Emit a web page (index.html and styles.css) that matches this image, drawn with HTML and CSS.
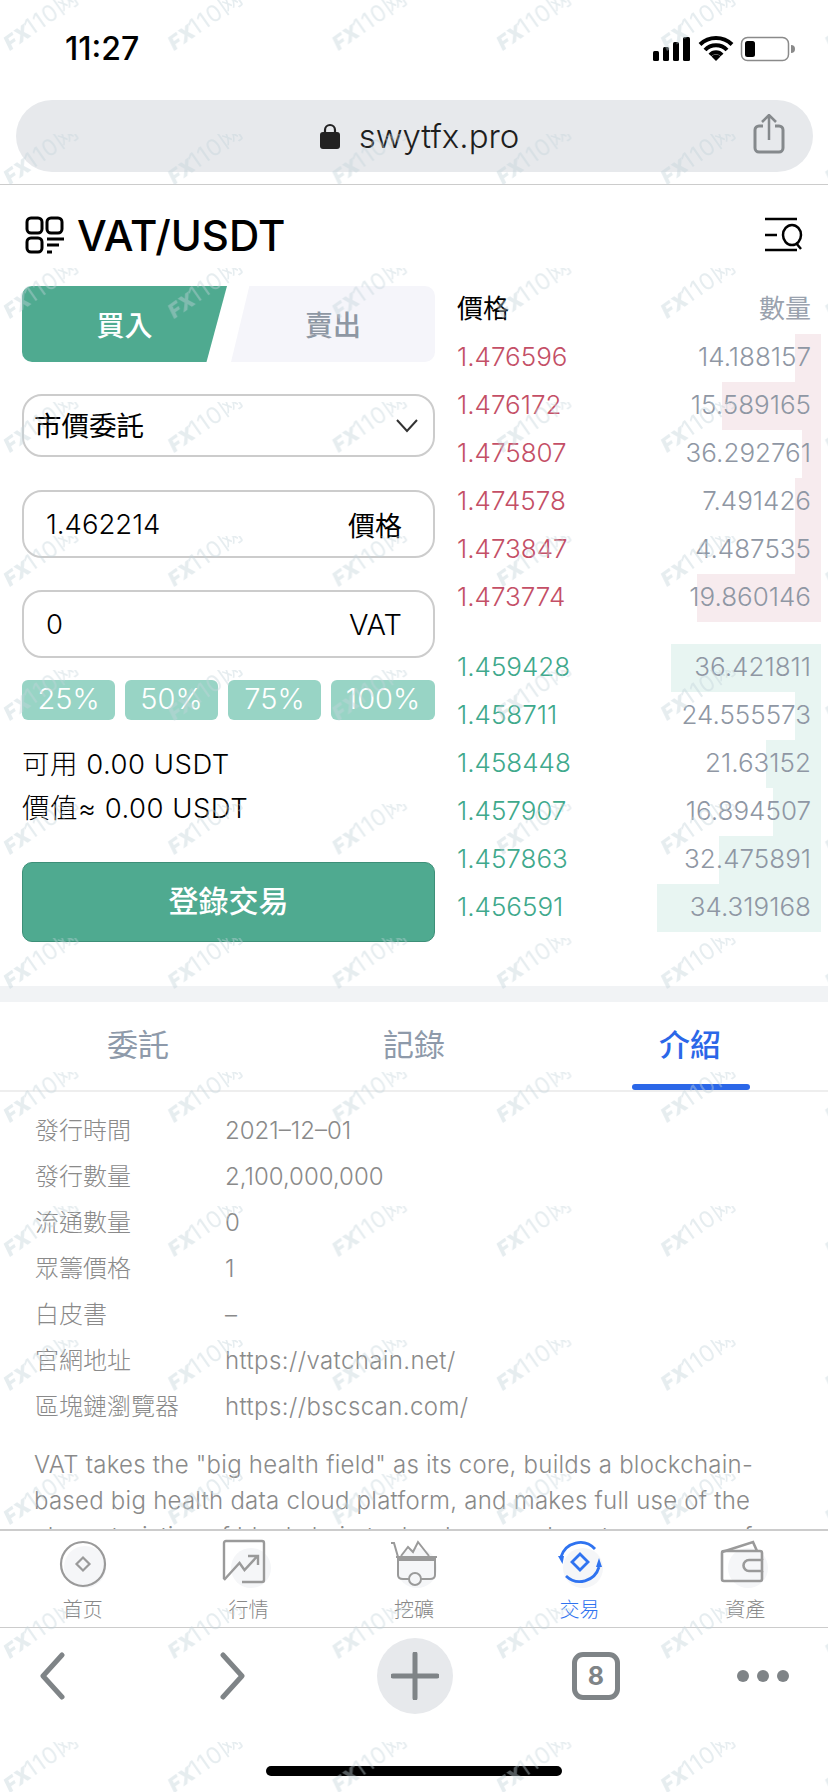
FILE: index.html
```html
<!DOCTYPE html>
<html lang="zh-Hant">
<head>
    <meta charset="UTF-8">
    <meta name="viewport" content="width=device-width, initial-scale=1.0">
    <title>VAT/USDT</title>
    <link rel="stylesheet" href="styles.css">
</head>
<body>
<div class="page">
    <!-- Status bar -->
    <div class="status-bar">
        <span class="time">11:27</span>
        <svg class="status-icons" width="142" height="26" viewBox="0 0 142 26">
            <rect x="0" y="15" width="6" height="10" rx="1.5"/>
            <rect x="10" y="11" width="6" height="14" rx="1.5"/>
            <rect x="20" y="6" width="6" height="19" rx="1.5"/>
            <rect x="30" y="1" width="7" height="24" rx="1.5"/>
            <path d="M47 8.5a23 23 0 0 1 32 0M52 14a15 15 0 0 1 22 0M57 19a8 8 0 0 1 12 0" fill="none" stroke="#000" stroke-width="4"/>
            <path d="M63 25l-4.500-4.500a6 6 0 0 1 9 0z"/>
            <rect x="88.500" y="1.500" width="47" height="23" rx="6" fill="#fff" stroke="#8a8a8a" stroke-width="1.500"/>
            <rect x="92" y="5" width="10" height="16" rx="2.500"/>
            <path d="M138 9a4 4 0 0 1 0 8z" fill="#8a8a8a"/>
        </svg>
    </div>

    <!-- Address bar -->
    <div class="address-wrap">
        <div class="address-bar">
            <svg width="20" height="26" viewBox="0 0 20 26">
                <path d="M5 11V7a5 5 0 0 1 10 0v4" fill="none" stroke="#222" stroke-width="2.200"/>
                <rect x="0" y="9" width="20" height="17" rx="3" fill="#222"/>
            </svg>
            <span class="address-text">swytfx.pro</span>
            <svg class="share-icon" width="32" height="40" viewBox="0 0 32 40">
                <path d="M10 12H6a4 4 0 0 0-4 4v18a4 4 0 0 0 4 4h20a4 4 0 0 0 4-4V16a4 4 0 0 0-4-4h-4" fill="none" stroke="#85898c" stroke-width="3"/>
                <path d="M16 26V2M9 8l7-7 7 7" fill="none" stroke="#85898c" stroke-width="2.500"/>
            </svg>
        </div>
    </div>

    <!-- Scrolling content, cut off by the tab bar -->
    <div class="content">
        <div class="pair-header">
            <div class="pair-title">
                <svg width="40" height="38" viewBox="0 0 40 38" fill="none" stroke="#000" stroke-width="3">
                    <rect x="2" y="2" width="15" height="15" rx="4"/>
                    <rect x="22" y="2" width="15" height="15" rx="4"/>
                    <rect x="2" y="22" width="15" height="14" rx="4"/>
                    <path d="M22 23H39M22 29H34M22 36H27"/>
                </svg>
                <span>VAT/USDT</span>
            </div>
            <svg width="40" height="36" viewBox="0 0 40 36" fill="none" stroke="#000" stroke-width="2.500">
                <path d="M1 2H33M1 18H13M1 33H33"/>
                <ellipse cx="28" cy="18" rx="9" ry="10"/>
                <path d="M32 26l5 6"/>
            </svg>
        </div>

        <div class="trade">
            <!-- Order form -->
            <div class="order-form">
                <div class="side-tabs">
                    <div class="side-tab buy">買入</div>
                    <div class="side-tab sell">賣出</div>
                </div>
                <div class="field select">
                    <span class="select-text">市價委託</span>
                    <svg width="22" height="14" viewBox="0 0 22 14"><path d="M1 1l10 11L21 1" fill="none" stroke="#333" stroke-width="2"/></svg>
                </div>
                <div class="field input first">
                    <span>1.462214</span>
                    <span class="unit">價格</span>
                </div>
                <div class="field input">
                    <span>0</span>
                    <span class="unit latin">VAT</span>
                </div>
                <div class="percents">
                    <div class="percent">25%</div>
                    <div class="percent">50%</div>
                    <div class="percent">75%</div>
                    <div class="percent wide">100%</div>
                </div>
                <div class="balance">
                    <div>可用 0.00 USDT</div>
                    <div>價值≈ 0.00 USDT</div>
                </div>
                <div class="submit">登錄交易</div>
            </div>

            <!-- Order book -->
            <div class="book">
                <div class="book-head">
                    <span>價格</span>
                    <span class="qty-head">數量</span>
                </div>
                <div class="book-rows asks">
                    <div class="row"><i class="bar" style="width: 26px"></i><span class="price">1.476596</span><span class="qty">14.188157</span></div>
                    <div class="row"><i class="bar" style="width: 99px"></i><span class="price">1.476172</span><span class="qty">15.589165</span></div>
                    <div class="row"><i class="bar" style="width: 19px"></i><span class="price">1.475807</span><span class="qty">36.292761</span></div>
                    <div class="row"><i class="bar" style="width: 26px"></i><span class="price">1.474578</span><span class="qty">7.491426</span></div>
                    <div class="row"><i class="bar" style="width: 26px"></i><span class="price">1.473847</span><span class="qty">4.487535</span></div>
                    <div class="row"><i class="bar" style="width: 124px"></i><span class="price">1.473774</span><span class="qty">19.860146</span></div>
                </div>
                <div class="book-rows bids">
                    <div class="row"><i class="bar" style="width: 150px"></i><span class="price">1.459428</span><span class="qty">36.421811</span></div>
                    <div class="row"><i class="bar" style="width: 26px"></i><span class="price">1.458711</span><span class="qty">24.555573</span></div>
                    <div class="row"><i class="bar" style="width: 55px"></i><span class="price">1.458448</span><span class="qty">21.63152</span></div>
                    <div class="row"><i class="bar" style="width: 48px"></i><span class="price">1.457907</span><span class="qty">16.894507</span></div>
                    <div class="row"><i class="bar" style="width: 102px"></i><span class="price">1.457863</span><span class="qty">32.475891</span></div>
                    <div class="row"><i class="bar" style="width: 164px"></i><span class="price">1.456591</span><span class="qty">34.319168</span></div>
                </div>
            </div>
        </div>

        <div class="band"></div>

        <!-- Detail tabs -->
        <div class="detail-tabs">
            <div class="detail-tab">委託</div>
            <div class="detail-tab">記錄</div>
            <div class="detail-tab active">介紹</div>
        </div>

        <div class="intro">
            <div class="intro-row"><span class="intro-label">發行時間</span><span>2021–12–01</span></div>
            <div class="intro-row"><span class="intro-label">發行數量</span><span>2,100,000,000</span></div>
            <div class="intro-row"><span class="intro-label">流通數量</span><span>0</span></div>
            <div class="intro-row"><span class="intro-label">眾籌價格</span><span>1</span></div>
            <div class="intro-row"><span class="intro-label">白皮書</span><span>–</span></div>
            <div class="intro-row"><span class="intro-label">官網地址</span><span class="intro-link">https://vatchain.net/</span></div>
            <div class="intro-row"><span class="intro-label">區塊鏈瀏覽器</span><span class="intro-link">https://bscscan.com/</span></div>
            <p class="intro-text">VAT takes the "big health field" as its core, builds a blockchain-based big health data cloud platform, and makes full use of the characteristics of blockchain technology, such as tamper-proof and transparent records.</p>
        </div>
    </div>

    <!-- Site tab bar -->
    <div class="tabbar">
        <div class="tabbar-item">
            <svg width="60" height="52" viewBox="0 0 60 52" fill="none" stroke="#9a9a9a" stroke-width="2.200">
                <circle cx="32" cy="28" r="21" fill="#f5f6f8" stroke="none"/>
                <circle cx="30" cy="25" r="22"/>
                <path d="M30 18.500l6.500 6.500-6.500 6.500-6.500-6.500z"/>
            </svg>
            <span>首页</span>
        </div>
        <div class="tabbar-item">
            <svg width="60" height="52" viewBox="0 0 60 52" fill="none" stroke="#9a9a9a" stroke-width="2.400">
                <circle cx="33" cy="29" r="20" fill="#f5f6f8" stroke="none"/>
                <path d="M6 40V4a2 2 0 0 1 2-2H44a2 2 0 0 1 2 2V41a2 2 0 0 1-2 2H24"/>
                <path d="M6 41L21.500 24l5 7L39.500 17M30 17H40V26"/>
            </svg>
            <span>行情</span>
        </div>
        <div class="tabbar-item">
            <svg width="60" height="52" viewBox="0 0 60 52" fill="none" stroke="#9a9a9a" stroke-width="2">
                <circle cx="33" cy="29" r="20" fill="#f5f6f8" stroke="none"/>
                <path d="M7 4H10L14 18V36Q14 40 19 40H25M37 40H46Q51 40 51 36V18M12 18H53"/>
                <path d="M14 19H51V22H14z" fill="#9a9a9a" stroke="none"/>
                <path d="M17 17L24 8L29 13L34 3L45 17"/>
                <circle cx="31" cy="40" r="6"/>
            </svg>
            <span>挖礦</span>
        </div>
        <div class="tabbar-item current">
            <svg width="60" height="52" viewBox="0 0 60 52" fill="none" stroke="#2f73f0" stroke-width="2.800">
                <circle cx="33" cy="29" r="20" fill="#f5f6f8" stroke="none"/>
                <path d="M11 18A20 20 0 0 1 45 10M49 28A20 20 0 0 1 16 37"/>
                <path d="M30 15l8 8-8 8-8-8z"/>
                <path d="M8 17h6l-1.500 8zM46 28l3-9 3 9z" fill="#2f73f0" stroke="none"/>
            </svg>
            <span>交易</span>
        </div>
        <div class="tabbar-item">
            <svg width="60" height="52" viewBox="0 0 60 52" fill="none" stroke="#9a9a9a" stroke-width="2.600">
                <circle cx="33" cy="29" r="20" fill="#f5f6f8" stroke="none"/>
                <path d="M47 21V14a2 2 0 0 0-2-2H9a2 2 0 0 0-2 2V40a2 2 0 0 0 2 2H45a2 2 0 0 0 2-2V32"/>
                <path d="M7 13L38 3L42 12"/>
                <path d="M47 21H34a5.500 5.500 0 0 0 0 11H47z"/>
            </svg>
            <span>資產</span>
        </div>
    </div>

    <!-- Browser toolbar -->
    <div class="toolbar">
        <svg width="28" height="48" viewBox="0 0 28 48"><path d="M24 3L5 24l19 21" fill="none" stroke="#7f8487" stroke-width="5" stroke-linecap="round" stroke-linejoin="round"/></svg>
        <svg class="tool-forward" width="28" height="48" viewBox="0 0 28 48"><path d="M4 3l19 21L4 45" fill="none" stroke="#7f8487" stroke-width="5" stroke-linecap="round" stroke-linejoin="round"/></svg>
        <div class="new-tab">
            <svg width="48" height="48" viewBox="0 0 48 48"><path d="M24 2V46M2 24H46" stroke="#7f8487" stroke-width="5" stroke-linecap="round"/></svg>
        </div>
        <div class="tab-count">8</div>
        <div class="dots"><i></i><i></i><i></i></div>
    </div>

    <div class="home-bar"></div>

    <!-- Watermark over the whole screenshot -->
    <svg class="watermark" width="828" height="1792">
        <defs>
            <pattern id="wm" width="164.300" height="134" patternUnits="userSpaceOnUse">
                <g transform="translate(10 51) rotate(-35)" fill="#c3d3da">
                    <text class="wm-logo" x="0" y="0">FX</text>
                    <text class="wm-text" x="26" y="0">110网</text>
                </g>
            </pattern>
        </defs>
        <rect width="828" height="1792" fill="url(#wm)" opacity="0.42"/>
    </svg>
</div>
</body>
</html>
```

FILE: styles.css
```css
body {
    margin: 0;
    background-color: #fff;
    font-family: Inter, "Noto Sans CJK TC", sans-serif;
    color: #000;
}
.page {
    position: relative;
    display: flex;
    flex-direction: column;
    width: 828px;
    height: 1792px;
    overflow: hidden;
}

/* status bar */
.status-bar {
    display: flex;
    align-items: center;
    justify-content: space-between;
    height: 98px;
    padding: 0 33px 0 65px;
    margin-bottom: 2px;
    flex-shrink: 0;
}
.time {
    font-size: 32px;
    font-weight: 500;
    line-height: 34px;
}

/* address bar */
.address-wrap {
    padding: 0 15px 12px 16px;
    border-bottom: 1px solid #ccc;
    flex-shrink: 0;
}
.address-bar {
    position: relative;
    display: flex;
    align-items: center;
    justify-content: center;
    gap: 19px;
    box-sizing: border-box;
    height: 72px;
    padding-left: 10px;
    background-color: #e7e9ec;
    border-radius: 36px;
}
.address-text {
    font-size: 33px;
    font-weight: 300;
    color: #1e1e1e;
}
.share-icon {
    position: absolute;
    right: 28px;
    top: 14px;
}

/* content */
.content {
    flex: 1;
    min-height: 0;
    overflow: hidden;
}
.pair-header {
    display: flex;
    align-items: center;
    justify-content: space-between;
    height: 44px;
    padding: 28px 24px 29px 25px;
}
.pair-title {
    display: flex;
    align-items: center;
    gap: 12px;
    font-size: 42px;
    font-weight: 500;
}
.trade {
    display: flex;
    padding-left: 22px;
}

/* order form */
.order-form {
    width: 413px;
}
.side-tabs {
    display: flex;
    justify-content: space-between;
    height: 76px;
}
.side-tab {
    display: flex;
    align-items: center;
    justify-content: center;
    font-size: 28px;
    font-weight: 500;
}
.buy {
    width: 205px;
    color: #fff;
    background-color: #4faa90;
    border-radius: 10px 0 0 10px;
    clip-path: polygon(0 0, 100% 0, 90% 100%, 0 100%);
}
.sell {
    width: 204px;
    color: #8e97a3;
    background-color: #f5f5fa;
    border-radius: 0 10px 10px 0;
    clip-path: polygon(9% 0, 100% 0, 100% 100%, 0 100%);
}
.field {
    display: flex;
    align-items: center;
    justify-content: space-between;
    box-sizing: border-box;
    border: 2px solid #ccc;
    border-radius: 20px;
    font-size: 27.500px;
    font-weight: 300;
}
.select {
    height: 63px;
    margin-top: 32px;
    padding: 0 15px 0 10px;
    font-size: 27.500px;
    font-weight: 400;
}
.select-text {
    margin-bottom: 4px;
}
.input {
    height: 68px;
    margin-top: 32px;
    padding: 0 31px 0 22px;
}
.input.first {
    margin-top: 33px;
}
.unit {
    font-size: 27px;
    font-weight: 400;
}
.unit.latin {
    font-size: 29px;
    font-weight: 300;
}
.percents {
    display: flex;
    gap: 10px;
    margin-top: 22px;
}
.percent {
    flex: 0 0 93px;
    height: 40px;
    line-height: 38px;
    text-align: center;
    font-size: 29px;
    font-weight: 300;
    color: #fff;
    background-color: #98d4c5;
    border-radius: 6px;
}
.percent.wide {
    flex-basis: 104px;
}
.balance {
    margin: 22px 0 32px;
    font-size: 27.500px;
    line-height: 44px;
    font-weight: 300;
    letter-spacing: 0.5px;
}
.submit {
    box-sizing: border-box;
    height: 80px;
    line-height: 76px;
    text-align: center;
    font-size: 30px;
    font-weight: 500;
    color: #fff;
    background-color: #4faa90;
    border: 1px solid #3d8f78;
    border-radius: 10px;
}

/* order book */
.book {
    width: 364px;
    margin-left: 22px;
}
.book-head {
    display: flex;
    justify-content: space-between;
    height: 48px;
    line-height: 46px;
    padding-right: 10px;
    font-size: 26px;
}
.qty-head {
    color: #9aa2ae;
}
.book-rows {
    margin-bottom: 22px;
}
.row {
    position: relative;
    display: flex;
    justify-content: space-between;
    height: 48px;
    line-height: 46px;
    padding-right: 10px;
    font-size: 26px;
    font-weight: 300;
}
.bar {
    position: absolute;
    top: 0;
    right: 0;
    bottom: 0;
}
.price,
.qty {
    position: relative;
}
.qty {
    color: #8f97a4;
}
.asks .bar {
    background-color: #f7ebee;
}
.asks .price {
    color: #c44f66;
}
.bids .bar {
    background-color: #e8f5f2;
}
.bids .price {
    color: #3fa98c;
}

/* detail tabs */
.band {
    height: 16px;
    margin-top: 32px;
    background-color: #f1f3f5;
}
.detail-tabs {
    display: flex;
    height: 88px;
    border-bottom: 2px solid #eee;
}
.detail-tab {
    position: relative;
    flex: 1;
    line-height: 86px;
    text-align: center;
    font-size: 31px;
    color: #8e9aaa;
}
.detail-tab.active {
    color: #2b67e8;
    font-weight: 500;
}
.detail-tab.active::after {
    content: "";
    position: absolute;
    left: 80px;
    bottom: 0;
    width: 118px;
    height: 6px;
    background-color: #2b67e8;
    border-radius: 3px;
}

/* intro */
.intro {
    padding: 16px 35px 0 34px;
    font-size: 24px;
    font-weight: 300;
    color: #8a8a8a;
}
.intro-row {
    display: flex;
    height: 46px;
    line-height: 46px;
}
.intro-label {
    width: 190px;
    padding-left: 1px;
}
.intro-link {
    letter-spacing: 0.4px;
}
.intro-text {
    margin: 17px 0 0;
    font-size: 24px;
    line-height: 36px;
    letter-spacing: 0.25px;
}

/* site tab bar */
.tabbar {
    display: flex;
    height: 96px;
    border-top: 2px solid #ccc;
    border-bottom: 1px solid #ccc;
    flex-shrink: 0;
    background-color: #fff;
}
.tabbar-item {
    flex: 1;
    display: flex;
    flex-direction: column;
    align-items: center;
    padding-top: 8px;
    font-size: 20px;
    font-weight: 300;
    color: #888;
}
.tabbar-item span {
    line-height: 30px;
    margin-top: 4px;
}
.tabbar-item.current {
    color: #2f73f0;
}

/* browser toolbar */
.toolbar {
    display: flex;
    align-items: center;
    height: 96px;
    padding-left: 38px;
    flex-shrink: 0;
}
.tool-forward {
    margin-left: 153px;
}
.new-tab {
    display: flex;
    align-items: center;
    justify-content: center;
    width: 76px;
    height: 76px;
    margin-left: 130px;
    background-color: #e7e9ec;
    border-radius: 50%;
}
.tab-count {
    box-sizing: border-box;
    width: 48px;
    height: 48px;
    margin-left: 119px;
    line-height: 38px;
    text-align: center;
    font-size: 25px;
    font-weight: 700;
    color: #7f8487;
    border: 5px solid #7f8487;
    border-radius: 11px;
}
.dots {
    display: flex;
    gap: 8px;
    margin-left: 117px;
}
.dots i {
    width: 12px;
    height: 12px;
    background-color: #7f8487;
    border-radius: 50%;
}
.home-bar {
    width: 296px;
    height: 10px;
    margin: 42px auto 16px;
    background-color: #000;
    border-radius: 5px;
    flex-shrink: 0;
}

/* watermark */
.watermark {
    position: absolute;
    top: 0;
    left: 0;
    pointer-events: none;
}
.wm-logo {
    font-size: 20px;
    font-weight: 900;
    font-style: italic;
}
.wm-text {
    font-size: 23px;
    font-weight: 400;
    letter-spacing: 1px;
}
```
